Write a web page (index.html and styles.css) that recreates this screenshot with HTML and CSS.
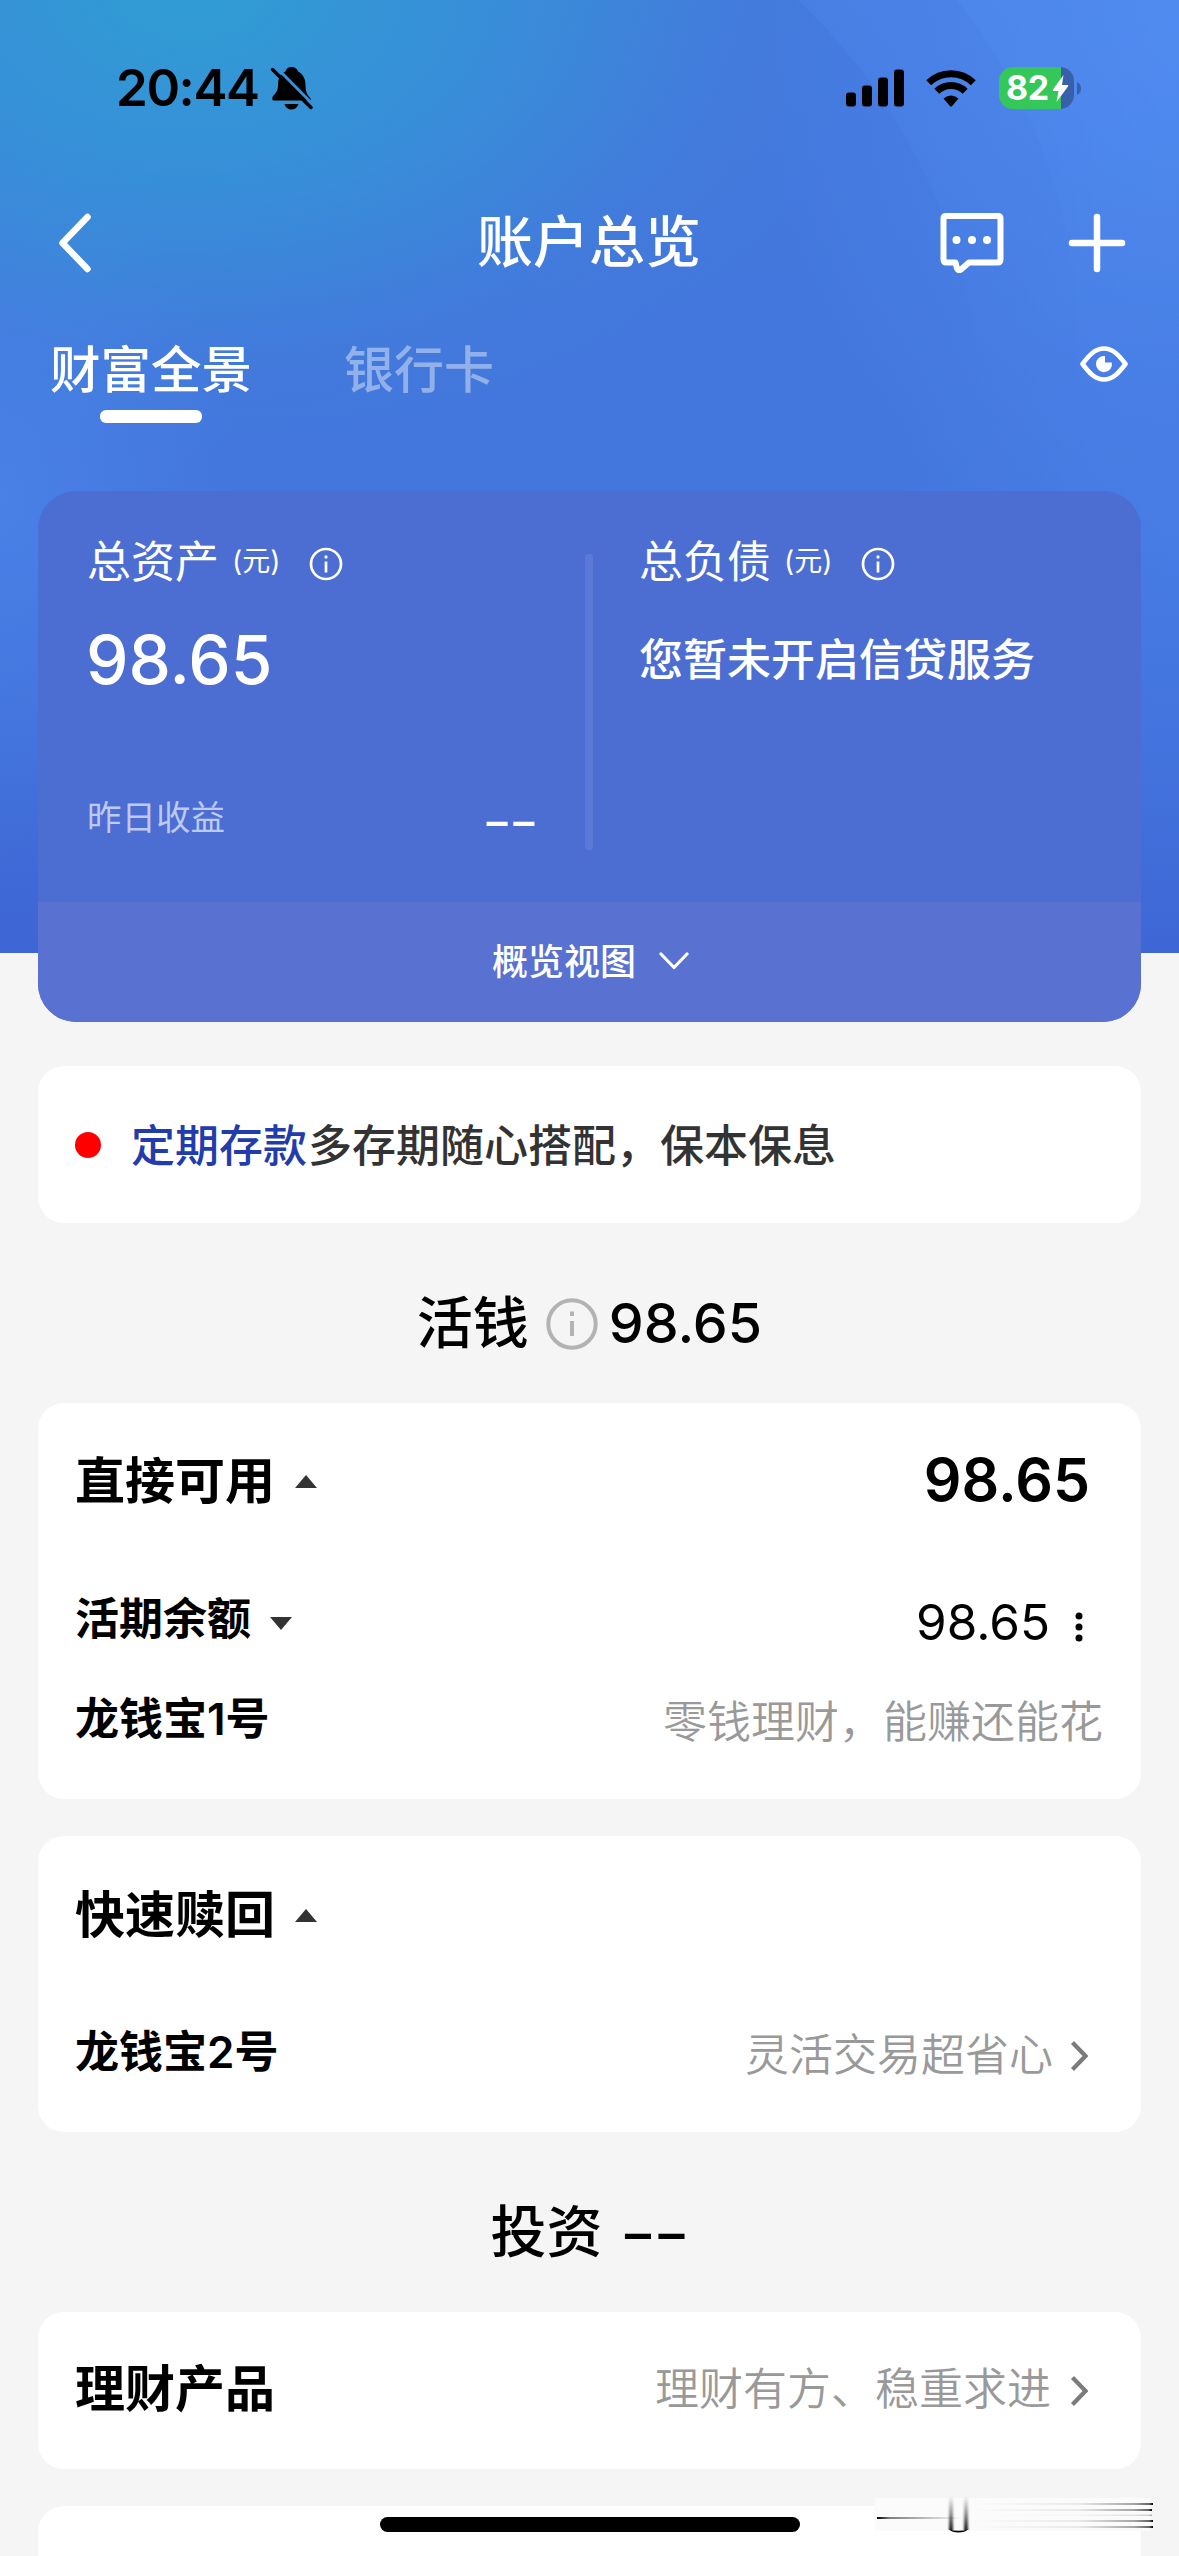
FILE: index.html
```html
<!DOCTYPE html>
<html lang="zh-CN">
<head>
<meta charset="utf-8">
<title>账户总览</title>
<link rel="stylesheet" href="styles.css">
</head>
<body>
<div class="screen">
  <header class="hero">
    <svg class="hero-rings" viewBox="0 0 1179 953" aria-hidden="true">
      <defs>
        <linearGradient id="ringFade" x1="0" y1="0" x2="0" y2="1">
          <stop offset="0" stop-color="#5c9bff" stop-opacity=".15"/>
          <stop offset=".42" stop-color="#5c9bff" stop-opacity="0"/>
        </linearGradient>
      </defs>
      <path fill="url(#ringFade)" d="M798 0A590 590 0 0 1 900 730L1179 953V0Z"/>
      <path fill="url(#ringFade)" d="M957 0A553 553 0 0 1 980 660L1179 953V0Z"/>
    </svg>

    <div class="status">
      <div class="status-left">
        <span class="clock">20:44</span>
        <svg class="bell" viewBox="0 0 42 44">
          <path d="M20.500 1C24 1 26.500 3 27 5.500C32 8 34.500 13 34.500 18.500C34.500 25 35.500 28 39.500 32.500L40 34.500H2.500C1 34.500 1 31.500 2 30C6.500 25.500 7 23 7 18.500C7 12 10 7.500 14.500 5.500C15 3 17 1 20.500 1Z"/>
          <path d="M13.500 38H27.500C26.500 41.500 24 43.500 20.500 43.500S14.500 41.500 13.500 38Z"/>
          <path class="bell-gap" d="M4.500 0.500L42 38.500"/>
          <path class="bell-slash" d="M1.500 3.500L40 41.500"/>
        </svg>
      </div>
      <div class="status-right">
        <svg class="signal" viewBox="0 0 58 38">
          <rect x="0" y="23.500" width="10" height="14" rx="3"/>
          <rect x="16" y="16.500" width="10" height="21" rx="3"/>
          <rect x="32" y="8.500" width="10" height="29" rx="3"/>
          <rect x="48" y="0.500" width="10" height="37" rx="3"/>
        </svg>
        <svg class="wifi" viewBox="0 0 50 37">
          <path class="arc" d="M2.700 12.700A32 32 0 0 1 47.300 12.700"/>
          <path class="arc" d="M10.800 21.300A20.500 20.500 0 0 1 39.200 21.300"/>
          <path d="M17.500 28.600Q25 22.500 32.500 28.600L25.900 36.200Q25 37 24.100 36.200Z"/>
        </svg>
        <div class="battery">
          <span class="battery-body"><span class="battery-num">82</span>
            <svg class="bolt" viewBox="0 0 17 27"><path d="M11.500 0L1 14.500Q0 16 1.700 16H6.500L4.500 27L16 11.500Q17 10 15.300 10H10Z"/></svg>
          </span>
          <svg class="battery-nub" viewBox="0 0 4 13"><path d="M0 0Q4 2 4 6.500T0 13Z"/></svg>
        </div>
      </div>
    </div>

    <nav class="nav">
      <svg class="back" viewBox="0 0 34 60"><path d="M29.500 4L4.500 30L29.500 56"/></svg>
      <h1 class="title">账户总览</h1>
      <div class="nav-actions">
        <svg class="chat" viewBox="0 0 64 62">
          <path d="M6 4H58Q60.500 4 60.500 6.500V47.500Q60.500 50.500 57.500 50.500H29L21 57.500Q18 59 17 56.500L15.500 50.500H6.500Q3.500 50.500 3.500 47.500V6.500Q3.500 4 6 4Z"/>
          <circle cx="16.500" cy="28" r="4"/><circle cx="32" cy="28" r="4"/><circle cx="47" cy="28" r="4"/>
        </svg>
        <svg class="plus" viewBox="0 0 58 60"><path d="M4 30H54M29 4V56"/></svg>
      </div>
    </nav>

    <div class="tabs">
      <div class="tab tab-active">财富全景</div>
      <div class="tab">银行卡</div>
      <svg class="eye" viewBox="0 0 48 36">
        <path class="lid" d="M2.500 18C9 9.500 15 2.500 24 2.500S39 9.500 45.500 18C39 26.500 33 33.500 24 33.500S9 26.500 2.500 18Z"/>
        <path class="pupil" d="M25 10.200V16.500H31.800A8 8 0 1 1 25 10.200Z"/>
      </svg>
    </div>

    <section class="summary">
      <div class="summary-main">
        <div class="col">
          <div class="label">总资产<span class="unit">(元)</span>
            <svg class="info" viewBox="0 0 34 34"><circle cx="17" cy="17" r="15"/><path d="M17 14.500V25.500M17 8.500V11.500"/></svg>
          </div>
          <div class="total">98.65</div>
          <div class="yesterday"><span>昨日收益</span><span class="dashes">--</span></div>
        </div>
        <div class="divider"></div>
        <div class="col">
          <div class="label">总负债<span class="unit">(元)</span>
            <svg class="info" viewBox="0 0 34 34"><circle cx="17" cy="17" r="15"/><path d="M17 14.500V25.500M17 8.500V11.500"/></svg>
          </div>
          <div class="credit">您暂未开启信贷服务</div>
        </div>
      </div>
      <div class="summary-foot">概览视图
        <svg class="down" viewBox="0 0 30 18"><path d="M2 2L15 15.500L28 2"/></svg>
      </div>
    </section>
  </header>

  <main class="content">
    <section class="card notice"><i class="dot"></i><span><b>定期存款</b>多存期随心搭配，保本保息</span></section>

    <h2 class="group">活钱
      <svg class="group-info" viewBox="0 0 52 52"><circle cx="26" cy="26" r="23.700"/><path d="M26 23V38M26 13.500V18"/></svg>
      <span class="group-sum">98.65</span>
    </h2>

    <section class="card cash">
      <div class="row row-head"><span class="name">直接可用</span><svg class="tri" viewBox="0 0 22 13"><path d="M11 0L22 13H0Z"/></svg><span class="sum">98.65</span></div>
      <div class="row row-demand"><span class="item">活期余额</span><svg class="tri" viewBox="0 0 22 13"><path d="M0 0H22L11 13Z"/></svg><span class="amount">98.65</span>
        <svg class="more" viewBox="0 0 8 30"><circle cx="4" cy="4" r="3.500"/><circle cx="4" cy="15" r="3.500"/><circle cx="4" cy="26" r="3.500"/></svg></div>
      <div class="row row-fund"><span class="item">龙钱宝1号</span><span class="hint">零钱理财，能赚还能花</span></div>
    </section>

    <section class="card redeem">
      <div class="row row-head"><span class="name">快速赎回</span><svg class="tri" viewBox="0 0 22 13"><path d="M11 0L22 13H0Z"/></svg></div>
      <div class="row row-link"><span class="item">龙钱宝2号</span><span class="hint">灵活交易超省心</span><svg class="go" viewBox="0 0 18 32"><path d="M2.500 2.500L15.500 16L2.500 29.500"/></svg></div>
    </section>

    <h2 class="group invest">投资 <span class="group-dashes">--</span></h2>

    <section class="card product">
      <div class="row row-link"><span class="name">理财产品</span><span class="hint">理财有方、稳重求进</span><svg class="go" viewBox="0 0 18 32"><path d="M2.500 2.500L15.500 16L2.500 29.500"/></svg></div>
    </section>
    <section class="card next"></section>
  </main>

  <div class="home-bar"></div>
  <svg class="streaks" viewBox="0 0 284 42" aria-hidden="true">
    <defs>
      <linearGradient id="toRight"><stop offset="0" stop-opacity="0"/><stop offset=".6" stop-opacity=".07"/><stop offset=".9" stop-opacity=".35"/><stop offset=".98" stop-opacity=".6"/><stop offset="1" stop-opacity="1"/></linearGradient>
      <linearGradient id="toLeft"><stop offset="0" stop-opacity="1"/><stop offset=".15" stop-opacity=".5"/><stop offset="1" stop-opacity="0"/></linearGradient>
      <linearGradient id="toBottom" x2="0" y2="1"><stop offset="0" stop-opacity="0"/><stop offset=".5" stop-opacity=".4"/><stop offset="1" stop-opacity=".9"/></linearGradient>
      <filter id="soft" x="-50%" width="200%"><feGaussianBlur stdDeviation="1 0"/></filter>
    </defs>
    <rect x="2" y="4" width="275" height="33" fill="#fbfbfb"/>
    <rect x="95" y="9" width="185" height="2" fill="url(#toRight)"/>
    <rect x="95" y="15" width="184" height="2" fill="url(#toRight)"/>
    <rect x="95" y="20.500" width="184" height="1.500" fill="url(#toRight)" opacity=".3"/>
    <rect x="95" y="26" width="185" height="2" fill="url(#toRight)"/>
    <rect x="95" y="32" width="185" height="2" fill="url(#toRight)"/>
    <rect x="4" y="23" width="85" height="2" fill="url(#toLeft)"/>
    <g filter="url(#soft)"><rect x="76" y="2" width="4" height="34" fill="url(#toBottom)"/><rect x="91" y="2" width="4" height="34" fill="url(#toBottom)"/></g>
    <path d="M76 35.500Q85.500 38 95 35.500Q92 38.500 85.500 38.500T76 35.500Z"/>
  </svg>
</div>
</body>
</html>
```
FILE: styles.css
```css
* { box-sizing: border-box; }
body {
  margin: 0;
  background: #f5f5f5;
  font-family: Inter, "Noto Sans CJK SC", sans-serif;
  color: #000;
}
svg { display: block; flex: none; }
h1, h2 { margin: 0; font-weight: 500; }

.screen {
  position: relative;
  width: 1179px;
  height: 2556px;
  overflow: hidden;
}

/* Blue header */
.hero {
  position: relative;
  height: 953px;
  color: #fff;
  background:
    radial-gradient(ellipse 700px 470px at 190px -10px, rgba(46, 160, 211, .92), rgba(51, 151, 215, .68) 45%, rgba(62, 132, 218, .28) 78%, rgba(69, 119, 220, 0) 100%),
    radial-gradient(ellipse 240px 380px at 0 500px, rgba(76, 134, 236, .65), rgba(76, 134, 236, 0)),
    radial-gradient(ellipse 420px 560px at 1179px 60px, rgba(78, 137, 240, .8), rgba(78, 137, 240, 0)),
    radial-gradient(ellipse 300px 400px at 1179px 560px, rgba(72, 126, 232, .6), rgba(72, 126, 232, 0)),
    linear-gradient(#4478dc 0, #4376dd 55%, #3e66d5 100%);
}
.hero-rings { position: absolute; inset: 0; width: 1179px; height: 953px; }

/* Status bar */
.status {
  position: relative;
  display: flex;
  justify-content: space-between;
  height: 176px;
  padding: 66px 98px 0 116px;
}
.status-left, .status-right { display: flex; align-items: center; height: 44px; color: #000; }
.clock { width: 155px; font-size: 51px; font-weight: 600; line-height: 44px; letter-spacing: -1.4px; white-space: nowrap; }
.bell { width: 42px; height: 44px; overflow: visible; }
.bell-gap { fill: none; stroke: #3790d8; stroke-width: 3; }
.bell-slash { fill: none; stroke: #000; stroke-width: 3.5; stroke-linecap: round; }
.signal { width: 58px; height: 38px; }
.wifi { width: 50px; height: 37px; margin-left: 22px; }
.wifi .arc { fill: none; stroke: #000; stroke-width: 7; }
.battery { display: flex; align-items: center; margin-left: 23px; gap: 3px; }
.battery-body {
  display: flex;
  align-items: center;
  width: 75px;
  height: 42px;
  padding-left: 7px;
  border-radius: 14px;
  background: linear-gradient(90deg, #34c759 62px, #385fa9 62px);
  color: #fff;
}
.battery-num { width: 46px; font-size: 34px; font-weight: 700; line-height: 42px; letter-spacing: -.5px; }
.bolt { width: 17px; height: 27px; fill: #fff; }
.battery-nub { width: 4px; height: 13px; fill: #385fa9; }

/* Title bar */
.nav {
  position: relative;
  display: grid;
  grid-template-columns: 1fr auto 1fr;
  align-items: center;
  height: 134px;
  padding: 0 53px 0 58px;
}
.back { width: 34px; height: 60px; fill: none; stroke: #fff; stroke-width: 6.5; stroke-linecap: round; stroke-linejoin: round; }
.title { font-size: 56px; line-height: 60px; padding-right: 6px; margin-top: -3px; }
.nav-actions { display: flex; justify-content: flex-end; align-items: center; gap: 64px; }
.chat { width: 64px; height: 62px; fill: #fff; }
.chat path { fill: none; stroke: #fff; stroke-width: 6; stroke-linejoin: round; }
.plus { width: 58px; height: 60px; fill: none; stroke: #fff; stroke-width: 6.5; stroke-linecap: round; }

/* Tabs */
.tabs { position: relative; display: flex; height: 181px; padding: 35px 51px 0 50px; }
.tab { margin-right: 92px; font-size: 50px; line-height: 50px; height: 79px; color: rgba(255, 255, 255, .42); font-weight: 500; }
.tab-active { font-size: 50.5px; color: #fff; }
.tab-active::after {
  content: "";
  display: block;
  width: 102px;
  height: 13px;
  margin: 15px auto 0;
  border-radius: 6px;
  background: #fff;
}
.eye { width: 48px; height: 36px; margin: 1px 0 0 auto; }
.eye .lid { fill: none; stroke: #fff; stroke-width: 4.6; stroke-linejoin: round; }
.eye .pupil { fill: #fff; }

/* Assets summary */
.summary {
  position: relative;
  width: 1103px;
  height: 531px;
  margin-left: 38px;
  border-radius: 38px;
  background: #4c6dd1;
  overflow: hidden;
}
.summary-main { display: flex; height: 411px; }
.col { width: 547px; padding: 49px 48px 0 49px; }
.divider { width: 8px; height: 296px; margin-top: 63px; border-radius: 3px; background: #5c79d7; }
.divider + .col { padding-left: 46px; }
.label { display: flex; align-items: center; height: 44px; font-size: 44px; line-height: 44px; font-weight: 400; }
.unit { width: 77px; padding-left: 13px; margin-top: -2px; font-size: 28px; font-weight: 400; white-space: nowrap; }
.info { width: 34px; height: 34px; margin: 3px 0 0 13px; fill: none; stroke: #fff; stroke-width: 2.7; }
.total { height: 60px; margin: 46px 0 0 -1px; font-size: 67.5px; line-height: 60px; font-weight: 500; }
.yesterday {
  display: flex;
  align-items: center;
  justify-content: space-between;
  height: 40px;
  margin-top: 105px;
  font-size: 34.5px;
  color: #bccaf2;
}
.dashes { margin: 11px 2px 0 0; font-size: 69px; font-weight: 300; line-height: 29px; letter-spacing: -4.5px; color: #fff; }
.credit { margin-top: 54px; font-size: 44px; line-height: 44px; font-weight: 500; white-space: nowrap; }
.summary-foot {
  display: flex;
  align-items: center;
  gap: 23px;
  height: 120px;
  padding: 0 0 7px 454px;
  background: #5971d0;
  font-size: 36px;
  font-weight: 500;
}
.down { width: 30px; height: 18px; margin-top: 5px; fill: none; stroke: #fff; stroke-width: 3.2; stroke-linecap: round; stroke-linejoin: round; }

/* Lists */
.content { padding: 113px 38px 0; }
.card { border-radius: 26px; background: #fff; }
.notice { display: flex; align-items: center; height: 157px; padding-left: 37px; gap: 30px; font-size: 44px; font-weight: 500; color: #333; }
.notice span { margin-top: -3px; }
.notice b { margin-right: 1px; font-weight: 500; color: #233cac; }
.dot { width: 26px; height: 26px; border-radius: 50%; background: #f00; }
.group {
  display: flex;
  align-items: center;
  justify-content: center;
  height: 180px;
  padding-top: 20px;
  font-size: 56px;
  line-height: 60px;
}
.group-info { width: 52px; height: 52px; margin: 1px 11px 0 17px; fill: none; stroke: #b3b3b3; stroke-width: 4; }
.group-sum { font-size: 55.5px; }
.invest { padding: 19px 3px 0 0; }
.group-dashes { margin: 0 0 0 16px; font-size: 86px; font-weight: 300; letter-spacing: -5.5px; }

.row { display: flex; align-items: center; padding-left: 37px; }
.name { font-size: 50px; font-weight: 600; line-height: 60px; }
.item { font-size: 44px; font-weight: 600; line-height: 60px; }
.tri { width: 22px; height: 13px; margin-left: 20px; fill: #333; }
.row-demand .tri { margin: 8px 0 0 19px; }
.sum { margin-left: auto; font-size: 59px; font-weight: 600; line-height: 60px; margin-top: -2px; }
.amount { margin: 6px 0 0 auto; font-size: 49.5px; font-weight: 400; }
.more { width: 8px; height: 30px; margin: 16px 0 0 25px; }
.hint { margin: 5px 0 0 auto; font-size: 44px; line-height: 60px; color: #999; font-weight: 350; white-space: nowrap; }
.go { width: 18px; height: 32px; margin: 7px 0 0 17px; fill: none; stroke: #7b7b7b; stroke-width: 4.2; }
.cash { height: 396px; padding-top: 48px; }
.cash .row-head { height: 60px; padding-right: 51px; }
.cash .row-demand { height: 60px; margin-top: 78px; padding-right: 58px; }
.cash .row-fund { height: 60px; margin-top: 40px; padding-right: 38px; }
.redeem { height: 296px; margin-top: 37px; padding-top: 49px; }
.redeem .row-head { height: 60px; }
.redeem .row-link { height: 60px; margin-top: 77px; }
.row-link { padding-right: 53px; }
.product { height: 157px; padding-top: 46px; }
.product .row-link { height: 60px; }
.product .hint { margin: 2px 2px 0 auto; }
.product .go { margin-top: 5px; }
.product .name { margin-top: 2px; }
.next { height: 90px; margin-top: 37px; }

.home-bar {
  position: absolute;
  left: 380px;
  top: 2517px;
  width: 420px;
  height: 15px;
  border-radius: 8px;
  background: #000;
}
.streaks { position: absolute; left: 873px; top: 2494px; width: 284px; height: 42px; }
```
